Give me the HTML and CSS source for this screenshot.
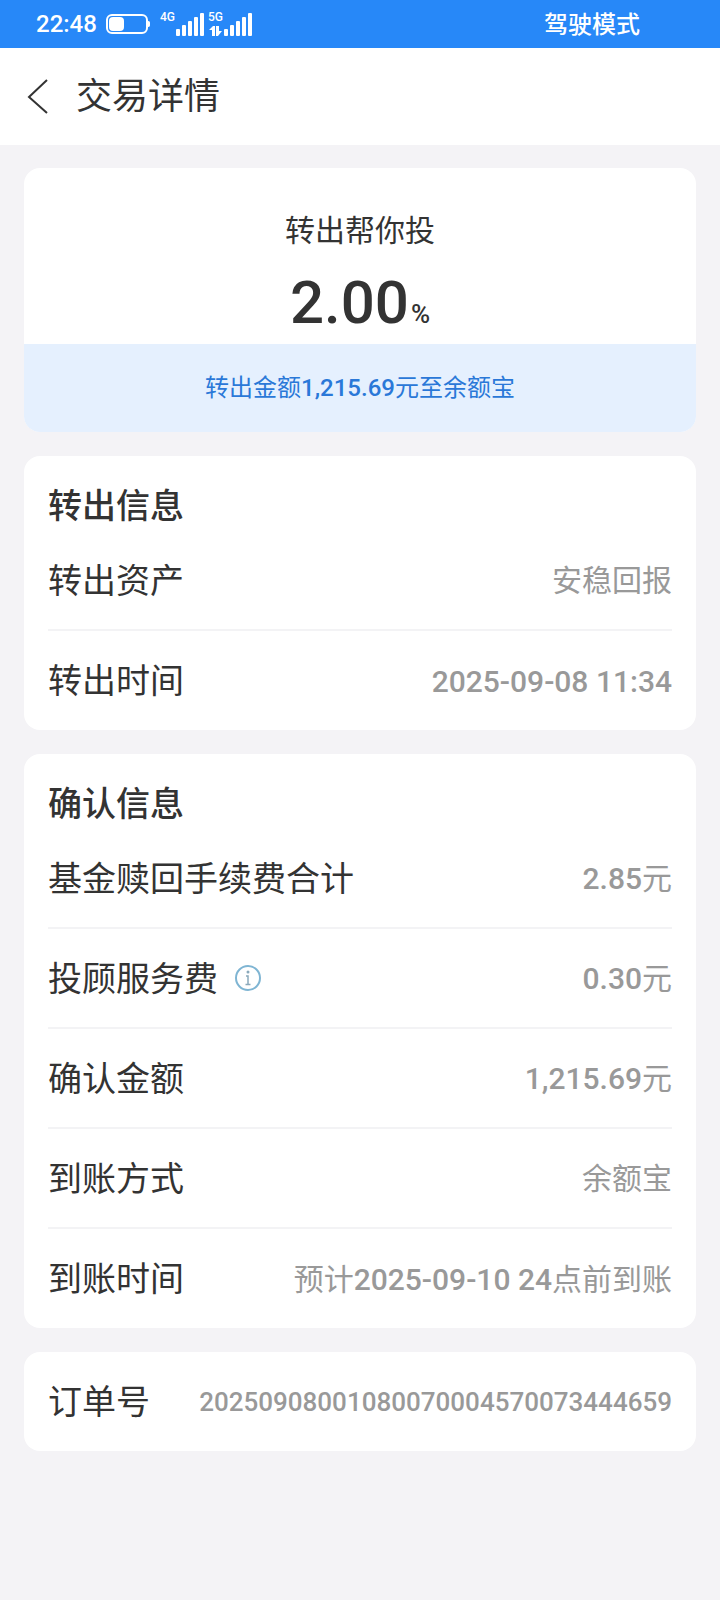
FILE: index.html
```
<!DOCTYPE html>
<html lang="zh-CN">
<head>
  <meta charset="UTF-8">
  <meta name="viewport" content="width=device-width, initial-scale=1.0">
  <title>交易详情</title>
  <link rel="stylesheet" href="styles.css">
</head>
<body>

  <!-- STATUS BAR -->
  <div class="status-bar">
    <span class="status-time">22:48</span>
    <svg class="battery" width="46" height="22" viewBox="0 0 46 22" fill="none">
      <rect x="2" y="2" width="40" height="18" rx="5" stroke="#fff" stroke-width="2"/>
      <rect x="4" y="4" width="15" height="14" rx="4" fill="#fff"/>
      <path d="M43 8c2 0 2 1 2 3s0 3-2 3z" fill="#fff"/>
    </svg>
    <svg class="signal" width="94" height="28" viewBox="0 0 94 28" fill="#fff">
      <text x="0" y="11">4G</text>
      <rect x="16" y="19" width="4" height="7" rx="1"/>
      <rect x="22" y="15" width="4" height="11" rx="1"/>
      <rect x="28" y="11" width="4" height="15" rx="1"/>
      <rect x="34" y="7" width="4" height="19" rx="1"/>
      <rect x="40" y="3" width="4" height="23" rx="1"/>
      <text x="48" y="11">5G</text>
      <path d="M49 20l4-4h2v10h-3v-6zM56 16h3v5h3l-4 5h-2z"/>
      <rect x="64" y="19" width="4" height="7" rx="1"/>
      <rect x="70" y="15" width="4" height="11" rx="1"/>
      <rect x="76" y="11" width="4" height="15" rx="1"/>
      <rect x="82" y="7" width="4" height="19" rx="1"/>
      <rect x="88" y="3" width="4" height="23" rx="1"/>
    </svg>
    <span class="status-mode">驾驶模式</span>
  </div>

  <!-- HEADER -->
  <header class="header">
    <button type="button" class="back-btn" aria-label="返回">
      <svg width="24" height="36" viewBox="0 0 24 36" fill="none" stroke="#333" stroke-width="2">
        <path d="M21 1L3 18l18 16"/>
      </svg>
    </button>
    <h1>交易详情</h1>
  </header>

  <main class="content">
    <section class="card summary">
      <p class="summary-name">转出帮你投</p>
      <p class="summary-value">2.00<span class="unit">%</span></p>
      <p class="summary-note">转出金额<b>1,215.69</b>元至余额宝</p>
    </section>

    <section class="card">
      <h2>转出信息</h2>
      <dl>
        <div class="row"><dt>转出资产</dt><dd>安稳回报</dd></div>
        <div class="row"><dt>转出时间</dt><dd><b>2025-09-08 11:34</b></dd></div>
      </dl>
    </section>

    <section class="card">
      <h2>确认信息</h2>
      <dl>
        <div class="row"><dt>基金赎回手续费合计</dt><dd><b>2.85</b>元</dd></div>
        <div class="row">
          <dt>投顾服务费
            <button type="button" class="info-btn" aria-label="投顾服务费说明">
              <svg width="28" height="28" viewBox="0 0 28 28" fill="none" stroke="#7fb5d3">
                <circle cx="14" cy="14" r="12" stroke-width="2"/>
                <circle cx="14" cy="8" r="1.500" fill="#8aa9bb" stroke="none"/>
                <path d="M12 12h2v8M11.500 20.500h5" stroke="#8aa9bb" stroke-width="1.500"/>
              </svg>
            </button>
          </dt>
          <dd><b>0.30</b>元</dd>
        </div>
        <div class="row"><dt>确认金额</dt><dd><b>1,215.69</b>元</dd></div>
        <div class="row"><dt>到账方式</dt><dd>余额宝</dd></div>
        <div class="row"><dt>到账时间</dt><dd>预计<b>2025-09-10 24</b>点前到账</dd></div>
      </dl>
    </section>

    <section class="card">
      <dl>
        <div class="row"><dt>订单号</dt><dd class="order-no"><b>20250908001080070004570073444659</b></dd></div>
      </dl>
    </section>
  </main>

</body>
</html>
```
FILE: styles.css
```
* {
  box-sizing: border-box;
}

body {
  margin: 0;
  font-family: Roboto, "Noto Sans CJK SC", sans-serif;
  background-color: #f4f3f6;
  color: #333;
}

h1, h2, p, dl, dd {
  margin: 0;
}

b {
  font-family: Roboto, sans-serif;
  font-weight: 500;
}

button {
  display: flex;
  padding: 0;
  border: none;
  background: none;
  cursor: pointer;
}

.status-bar {
  display: flex;
  align-items: center;
  height: 48px;
  padding: 0 80px 0 36px;
  background-color: #2788f8;
  color: #fff;
  font-size: 24px;
  font-weight: 500;
}

.battery {
  margin-left: 8px;
}

.signal {
  margin-left: 9px;
  font-size: 12px;
}

.status-mode {
  margin-left: auto;
  padding-bottom: 3px;
}

.header {
  display: flex;
  align-items: center;
  gap: 26px;
  height: 97px;
  padding: 0 26px;
  background-color: #fff;
}

.header h1 {
  padding-bottom: 8px;
  font-size: 36px;
  font-weight: 400;
}

.content {
  display: flex;
  flex-direction: column;
  gap: 24px;
  padding: 23px 24px;
}

.card {
  padding: 0 24px;
  border-radius: 16px;
  background-color: #fff;
  overflow: hidden;
}

.card h2 {
  padding: 26px 0 1px;
  font-size: 34px;
  font-weight: 500;
  line-height: 48px;
}

.summary {
  padding: 41px 0 0;
  text-align: center;
}

.summary-name {
  font-size: 30px;
  line-height: 44px;
}

.summary-value {
  padding: 12px 0 4px;
  font-family: Roboto, sans-serif;
  font-size: 60px;
  font-weight: 500;
  line-height: 75px;
}

.summary-value .unit {
  margin-left: 2px;
  font-size: 26px;
  line-height: 1;
}

.summary-note {
  background-color: #e5f0fe;
  color: #2a78d8;
  font-size: 24px;
  line-height: 88px;
}

.row {
  display: flex;
  align-items: center;
  justify-content: space-between;
  height: 100px;
  padding-bottom: 4px;
  border-bottom: 2px solid #f3f3f5;
}

.row:last-child {
  height: 99px;
  border-bottom: none;
}

.row dt {
  display: flex;
  align-items: center;
  gap: 16px;
  font-size: 34px;
}

.row dd {
  color: #999;
  font-family: "Noto Sans CJK SC", sans-serif;
  font-size: 30px;
}

.row .order-no {
  font-size: 26px;
}

.info-btn {
  padding-top: 3px;
}
```
